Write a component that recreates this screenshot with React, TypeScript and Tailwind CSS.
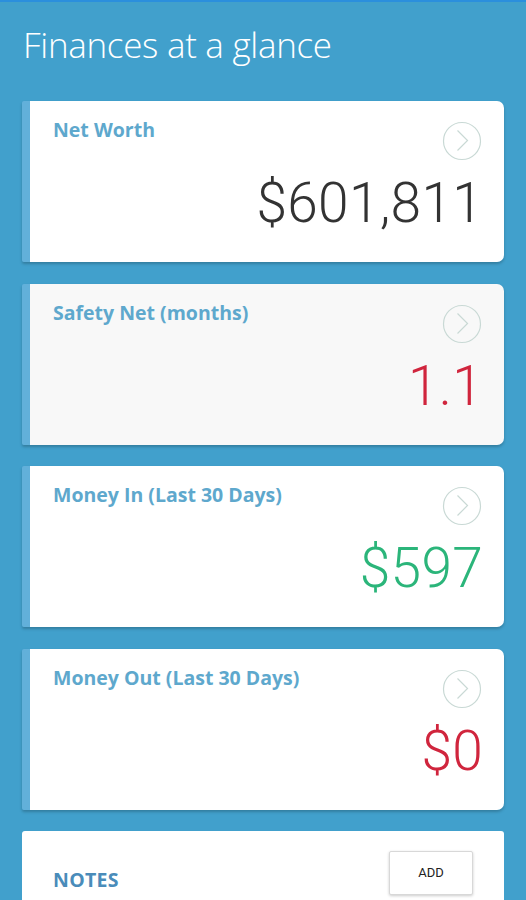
import React from "react";

function Chevron() {
  return (
    <svg width="40" height="40" viewBox="0 0 40 40" className="shrink-0">
      <circle cx="20" cy="20" r="18.5" fill="none" stroke="#c9d9d5" strokeWidth="1.2" />
      <path d="M15.5 9.5 L25.5 19.5 L15.5 29.5" fill="none" stroke="#c9d9d5" strokeWidth="1.2" />
    </svg>
  );
}

type CardProps = { label: string; value: string; color: string; bg: string };

function Card({ label, value, color, bg }: CardProps) {
  return (
    <div className="flex h-[161px] rounded-r-[7px] rounded-l-[2px] overflow-hidden shadow-[0_2px_3px_rgba(0,0,0,0.22)]">
      <div className="w-[8px] bg-[#62b0da]" />
      <div className={`flex-1 flex flex-col pl-[23px] pr-[22px] ${bg}`}>
        <div className="flex justify-between items-start">
          <div
            className="mt-[15px] text-[19.5px] font-bold text-[#5ea8cd] leading-[28px]"
            style={{ fontFamily: '"Open Sans", sans-serif' }}
          >
            {label}
          </div>
          <div className="mt-[20px]">
            <Chevron />
          </div>
        </div>
        <div
          className={`mt-[16px] text-right -mr-[1px] text-[55px] font-light leading-[52px] tracking-[0.3px] ${color}`}
          style={{ fontFamily: 'Roboto, sans-serif' }}
        >
          {value}
        </div>
      </div>
    </div>
  );
}

export default function App() {
  return (
    <div className="w-[526px] h-[900px] overflow-hidden bg-[#41a0cc] border-t-[2px] border-[#2b8fdd]">
      <h1
        className="pl-[23px] pt-[22px] text-[35px] font-light text-white leading-[42px] tracking-[-0.3px]"
        style={{ fontFamily: '"Open Sans", sans-serif' }}
      >
        Finances at a glance
      </h1>
      <div className="px-[22px] pt-[35px] flex flex-col gap-[21.5px]">
        <Card label="Net Worth" value="$601,811" color="text-[#333333]" bg="bg-white" />
        <Card label="Safety Net (months)" value="1.1" color="text-[#d0253d]" bg="bg-[#f8f8f8]" />
        <Card label="Money In (Last 30 Days)" value="$597" color="text-[#2bb57a]" bg="bg-white" />
        <Card label="Money Out (Last 30 Days)" value="$0" color="text-[#d0253d]" bg="bg-white" />
        <div className="h-[120px] bg-white rounded-t-[3px] flex items-start justify-between pl-[31px] pr-[31px]">
          <div
            className="mt-[34px] text-[19.5px] font-bold text-[#4a8cba] tracking-[0.3px]"
            style={{ fontFamily: '"Open Sans", sans-serif' }}
          >
            NOTES
          </div>
          <button
            className="mt-[20px] w-[84px] h-[44px] border border-[#d8d8d8] rounded-[2px] bg-white shadow-[0_1px_3px_rgba(0,0,0,0.2)] text-[13px] text-[#222]"
            style={{ fontFamily: 'Roboto, sans-serif' }}
          >
            ADD
          </button>
        </div>
      </div>
    </div>
  );
}
